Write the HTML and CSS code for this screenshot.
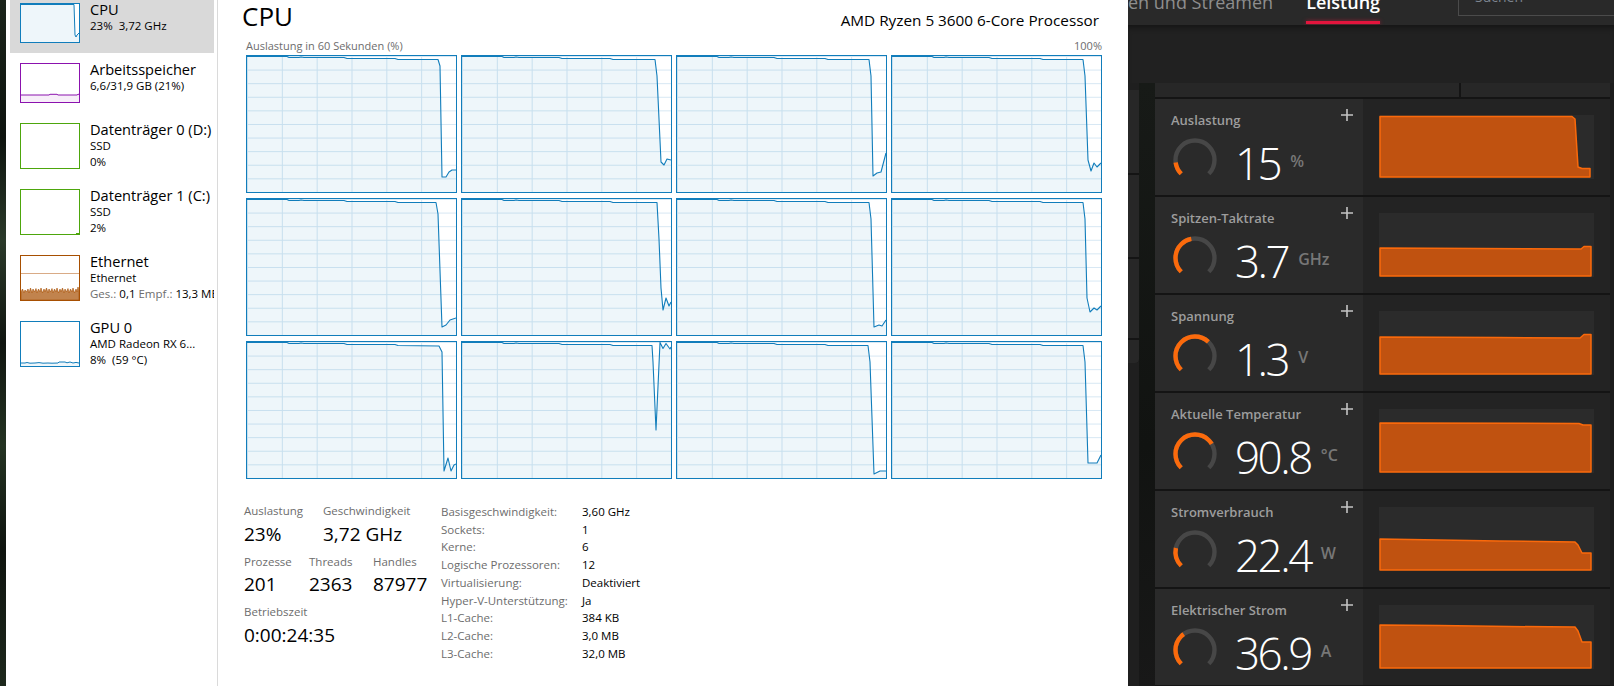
FILE: index.html
```html
<!DOCTYPE html>
<html lang="de">
<head>
<meta charset="utf-8">
<title>Task-Manager – CPU</title>
<link rel="stylesheet" href="styles.css">
</head>
<body>
<div class="screen">
  <div class="desktop-edge"></div>

  <div class="taskmgr">
    <aside class="tm-side">
      <div class="side-list">
        <div class="side-item selected">
          <div class="thumb thumb-cpu t40">
            <svg width="58" height="38" viewBox="0 0 58 38"><path class="f-blue" d="M0,38 L0,0.5 53,0.5 54,31 55,33 56,31 58,29 L58,38 Z"/><polyline class="l-blue" points="0,0.5 53,0.5 54,31 55,33 56,31 58,29"/></svg>
          </div>
          <div class="side-text">
            <div class="side-title">CPU</div>
            <div class="side-sub">23%&nbsp; 3,72 GHz</div>
          </div>
        </div>
        <div class="side-item">
          <div class="thumb thumb-mem t40">
            <svg width="58" height="38" viewBox="0 0 58 38"><path class="f-purple" d="M0,38 L0,31 28,31 29,30.3 36,30.3 37,31 56,31 57,30.3 58,30.3 L58,38 Z"/><polyline class="l-purple" points="0,31 28,31 29,30.3 36,30.3 37,31 56,31 57,30.3 58,30.3"/></svg>
          </div>
          <div class="side-text">
            <div class="side-title">Arbeitsspeicher</div>
            <div class="side-sub">6,6/31,9 GB (21%)</div>
          </div>
        </div>
        <div class="side-item">
          <div class="thumb thumb-disk t46"></div>
          <div class="side-text">
            <div class="side-title">Datenträger 0 (D:)</div>
            <div class="side-sub">SSD</div>
            <div class="side-sub">0%</div>
          </div>
        </div>
        <div class="side-item">
          <div class="thumb thumb-disk t46">
            <svg width="58" height="44" viewBox="0 0 58 44"><polyline class="l-green" points="55,43.5 58,43.5"/></svg>
          </div>
          <div class="side-text">
            <div class="side-title">Datenträger 1 (C:)</div>
            <div class="side-sub">SSD</div>
            <div class="side-sub">2%</div>
          </div>
        </div>
        <div class="side-item">
          <div class="thumb thumb-eth t46">
            <svg width="58" height="44" viewBox="0 0 58 44">
              <line class="l-eth-light" x1="0" y1="17.5" x2="58" y2="17.5"/>
              <path class="f-eth" d="M0,44 L0,36 1.5,33 3,37 4,34 5.5,36 7,33 8,37 9.5,32 11,37 12,33 13.5,36 15,32.5 16,37 17.5,33 19,36 20,32 21.5,37 23,33 24,36 25.5,32 27,37 28,33 29.5,36 31,32.5 32,37 33.5,33 35,36 36,32 37.5,37 39,33 40,36 41.5,32 43,37 44,33 45.5,36 47,32.5 48,37 49.5,33 51,36 52,32 53.5,37 55,33 56,36 57,31 58,35 L58,44 Z"/>
            </svg>
          </div>
          <div class="side-text">
            <div class="side-title">Ethernet</div>
            <div class="side-sub">Ethernet</div>
            <div class="side-sub"><span class="muted">Ges.:</span> 0,1 <span class="muted">Empf.:</span> 13,3 MBit/s</div>
          </div>
        </div>
        <div class="side-item">
          <div class="thumb thumb-gpu t46">
            <svg width="58" height="44" viewBox="0 0 58 44"><path class="f-blue" d="M0,44 L0,41 4,41 6,40.5 9,41.2 14,41 18,40.6 22,41.2 27,41 31,41.2 37,41 38,40 44,40 46,40.8 49,40 52,41 55,40.4 58,41 L58,44 Z"/><polyline class="l-blue" points="0,41 4,41 6,40.5 9,41.2 14,41 18,40.6 22,41.2 27,41 31,41.2 37,41 38,40 44,40 46,40.8 49,40 52,41 55,40.4 58,41"/></svg>
          </div>
          <div class="side-text">
            <div class="side-title">GPU 0</div>
            <div class="side-sub">AMD Radeon RX 6...</div>
            <div class="side-sub">8%&nbsp; (59 °C)</div>
          </div>
        </div>
      </div>
    </aside>

    <main class="tm-main">
      <header class="tm-head">
        <h1 class="tm-title">CPU</h1>
        <div class="cpu-name">AMD Ryzen 5 3600 6-Core Processor</div>
      </header>
      <div class="graph-caption"><span>Auslastung in 60 Sekunden (%)</span><span>100%</span></div>

      <div class="graph-grid">
        <div class="graph"><svg viewBox="0 0 209 136"><path class="gf" d="M0,136 L0,0.5 40,0.5 42,1.5 52,1.5 54,1 57,1.5 97,1.5 100,2.5 148,2.5 151,3.5 191,3.5 193,10 195,121 199,121 202,116 205,114 209,114 L209,136 Z"/><polyline class="gl" points="0,0.5 40,0.5 42,1.5 52,1.5 54,1 57,1.5 97,1.5 100,2.5 148,2.5 151,3.5 191,3.5 193,10 195,121 199,121 202,116 205,114 209,114"/></svg></div>
        <div class="graph"><svg viewBox="0 0 209 136"><path class="gf" d="M0,136 L0,0.5 40,0.5 42,1.5 52,1.5 54,1 57,1.5 97,1.5 100,2.5 148,2.5 151,3.5 193,3.5 195,20 199,106 202,109 205,103 209,104 L209,136 Z"/><polyline class="gl" points="0,0.5 40,0.5 42,1.5 52,1.5 54,1 57,1.5 97,1.5 100,2.5 148,2.5 151,3.5 193,3.5 195,20 199,106 202,109 205,103 209,104"/></svg></div>
        <div class="graph"><svg viewBox="0 0 209 136"><path class="gf" d="M0,136 L0,0.5 40,0.5 42,1.5 52,1.5 54,1 57,1.5 97,1.5 100,2.5 148,2.5 151,3.5 192,3.5 194,20 196,120 200,117 204,116 209,97 L209,136 Z"/><polyline class="gl" points="0,0.5 40,0.5 42,1.5 52,1.5 54,1 57,1.5 97,1.5 100,2.5 148,2.5 151,3.5 192,3.5 194,20 196,120 200,117 204,116 209,97"/></svg></div>
        <div class="graph"><svg viewBox="0 0 209 136"><path class="gf" d="M0,136 L0,0.5 40,0.5 42,1.5 52,1.5 54,1 57,1.5 97,1.5 100,2.5 148,2.5 151,3.5 191,3.5 193,20 196,104 199,115 202,107 205,111 209,107 L209,136 Z"/><polyline class="gl" points="0,0.5 40,0.5 42,1.5 52,1.5 54,1 57,1.5 97,1.5 100,2.5 148,2.5 151,3.5 191,3.5 193,20 196,104 199,115 202,107 205,111 209,107"/></svg></div>

        <div class="graph"><svg viewBox="0 0 209 136"><path class="gf" d="M0,136 L0,0.5 40,0.5 42,1.5 52,1.5 54,1 57,1.5 97,1.5 100,2.5 148,2.5 151,3.5 189,3.5 191,15 195,128 199,126 203,121 209,119 L209,136 Z"/><polyline class="gl" points="0,0.5 40,0.5 42,1.5 52,1.5 54,1 57,1.5 97,1.5 100,2.5 148,2.5 151,3.5 189,3.5 191,15 195,128 199,126 203,121 209,119"/></svg></div>
        <div class="graph"><svg viewBox="0 0 209 136"><path class="gf" d="M0,136 L0,0.5 40,0.5 42,1.5 52,1.5 54,1 57,1.5 97,1.5 100,2.5 148,2.5 151,3.5 195,3.5 197,40 199,89 201,111 204,99 207,107 209,103 L209,136 Z"/><polyline class="gl" points="0,0.5 40,0.5 42,1.5 52,1.5 54,1 57,1.5 97,1.5 100,2.5 148,2.5 151,3.5 195,3.5 197,40 199,89 201,111 204,99 207,107 209,103"/></svg></div>
        <div class="graph"><svg viewBox="0 0 209 136"><path class="gf" d="M0,136 L0,0.5 40,0.5 42,1.5 52,1.5 54,1 57,1.5 97,1.5 100,2.5 148,2.5 151,3.5 192,3.5 194,20 197,128 202,126 205,127 209,121 L209,136 Z"/><polyline class="gl" points="0,0.5 40,0.5 42,1.5 52,1.5 54,1 57,1.5 97,1.5 100,2.5 148,2.5 151,3.5 192,3.5 194,20 197,128 202,126 205,127 209,121"/></svg></div>
        <div class="graph"><svg viewBox="0 0 209 136"><path class="gf" d="M0,136 L0,0.5 40,0.5 42,1.5 52,1.5 54,1 57,1.5 97,1.5 100,2.5 148,2.5 151,3.5 191,3.5 193,20 195,99 198,113 202,109 205,111 209,107 L209,136 Z"/><polyline class="gl" points="0,0.5 40,0.5 42,1.5 52,1.5 54,1 57,1.5 97,1.5 100,2.5 148,2.5 151,3.5 191,3.5 193,20 195,99 198,113 202,109 205,111 209,107"/></svg></div>

        <div class="graph"><svg viewBox="0 0 209 136"><path class="gf" d="M0,136 L0,0.5 40,0.5 42,1.5 52,1.5 54,1 57,1.5 97,1.5 100,2.5 148,2.5 151,3.5 192,4 195,10 197,129 201,116 204,129 207,123 209,122 L209,136 Z"/><polyline class="gl" points="0,0.5 40,0.5 42,1.5 52,1.5 54,1 57,1.5 97,1.5 100,2.5 148,2.5 151,3.5 192,4 195,10 197,129 201,116 204,129 207,123 209,122"/></svg></div>
        <div class="graph"><svg viewBox="0 0 209 136"><path class="gf" d="M0,136 L0,0.5 40,0.5 42,1.5 52,1.5 54,1 57,1.5 97,1.5 100,2.5 148,2.5 151,3.5 190,3.5 191,20 194,88 198,0.5 201,6.5 204,1.5 208,7 209,5 L209,136 Z"/><polyline class="gl" points="0,0.5 40,0.5 42,1.5 52,1.5 54,1 57,1.5 97,1.5 100,2.5 148,2.5 151,3.5 190,3.5 191,20 194,88 198,0.5 201,6.5 204,1.5 208,7 209,5"/></svg></div>
        <div class="graph"><svg viewBox="0 0 209 136"><path class="gf" d="M0,136 L0,0.5 40,0.5 42,1.5 52,1.5 54,1 57,1.5 97,1.5 100,2.5 148,2.5 151,3.5 191,3.5 193,20 197,132 203,129 209,129 L209,136 Z"/><polyline class="gl" points="0,0.5 40,0.5 42,1.5 52,1.5 54,1 57,1.5 97,1.5 100,2.5 148,2.5 151,3.5 191,3.5 193,20 197,132 203,129 209,129"/></svg></div>
        <div class="graph"><svg viewBox="0 0 209 136"><path class="gf" d="M0,136 L0,0.5 40,0.5 42,1.5 52,1.5 54,1 57,1.5 97,1.5 100,2.5 148,2.5 151,3.5 191,3.5 193,20 196,121 205,121 209,113 L209,136 Z"/><polyline class="gl" points="0,0.5 40,0.5 42,1.5 52,1.5 54,1 57,1.5 97,1.5 100,2.5 148,2.5 151,3.5 191,3.5 193,20 196,121 205,121 209,113"/></svg></div>
      </div>

      <section class="stats">
        <div class="stats-left">
          <div class="stat-row">
            <div class="stat w79"><div class="stat-lbl">Auslastung</div><div class="stat-val">23%</div></div>
            <div class="stat"><div class="stat-lbl">Geschwindigkeit</div><div class="stat-val">3,72 GHz</div></div>
          </div>
          <div class="stat-row">
            <div class="stat w65"><div class="stat-lbl">Prozesse</div><div class="stat-val">201</div></div>
            <div class="stat w64"><div class="stat-lbl">Threads</div><div class="stat-val">2363</div></div>
            <div class="stat"><div class="stat-lbl">Handles</div><div class="stat-val">87977</div></div>
          </div>
          <div class="stat-row">
            <div class="stat"><div class="stat-lbl">Betriebszeit</div><div class="stat-val">0:00:24:35</div></div>
          </div>
        </div>
        <dl class="spec">
          <dt>Basisgeschwindigkeit:</dt><dd>3,60 GHz</dd>
          <dt>Sockets:</dt><dd>1</dd>
          <dt>Kerne:</dt><dd>6</dd>
          <dt>Logische Prozessoren:</dt><dd>12</dd>
          <dt>Virtualisierung:</dt><dd>Deaktiviert</dd>
          <dt>Hyper-V-Unterstützung:</dt><dd>Ja</dd>
          <dt>L1-Cache:</dt><dd>384 KB</dd>
          <dt>L2-Cache:</dt><dd>3,0 MB</dd>
          <dt>L3-Cache:</dt><dd>32,0 MB</dd>
        </dl>
      </section>
    </main>
  </div>

  <div class="adrenalin">
    <div class="adr-top">
      <div class="adr-tab">en und Streamen</div>
      <div class="adr-tab active"><span class="adr-tab-text">Leistung</span><span class="adr-tab-line"></span></div>
      <div class="adr-search"><span>Suchen</span></div>
    </div>
    <div class="adr-band"></div>
    <div class="adr-body">
      <div class="adr-leftcol">
        <div class="adr-lpanel">
          <div class="lp h83"></div>
          <div class="lp h82"></div>
          <div class="lp h79"></div>
          <div class="lp h23"></div>
        </div>
      </div>
      <div class="adr-gap"></div>
      <div class="adr-main">
        <div class="adr-subhead"><div class="sh1"></div><div class="sh2"></div></div>

        <div class="card">
          <div class="card-info">
            <div class="card-head"><span class="card-label">Auslastung</span><svg class="plus" width="12" height="12" viewBox="0 0 12 12"><path d="M6 0V12M0 6H12"/></svg></div>
            <div class="card-row">
              <svg class="gauge" width="48" height="48" viewBox="0 0 48 48"><path class="g-track" d="M10.21 37.79A19.5 19.5 0 1 1 37.79 37.79"/><path class="g-fill" pathLength="100" stroke-dasharray="14 200" d="M10.21 37.79A19.5 19.5 0 1 1 37.79 37.79"/></svg>
              <span class="card-val">15</span><span class="card-unit">%</span>
            </div>
          </div>
          <div class="card-chart"><div class="chart"><svg width="215" height="64" viewBox="0 0 215 64"><path d="M1 62L1 1.5L193 1.5L196 4L199 52L203 53.5L211 53.5L211 62Z"/></svg></div></div>
        </div>

        <div class="card">
          <div class="card-info">
            <div class="card-head"><span class="card-label">Spitzen-Taktrate</span><svg class="plus" width="12" height="12" viewBox="0 0 12 12"><path d="M6 0V12M0 6H12"/></svg></div>
            <div class="card-row">
              <svg class="gauge" width="48" height="48" viewBox="0 0 48 48"><path class="g-track" d="M10.21 37.79A19.5 19.5 0 1 1 37.79 37.79"/><path class="g-fill" pathLength="100" stroke-dasharray="46 200" d="M10.21 37.79A19.5 19.5 0 1 1 37.79 37.79"/></svg>
              <span class="card-val">3.7</span><span class="card-unit">GHz</span>
            </div>
          </div>
          <div class="card-chart"><div class="chart"><svg width="215" height="64" viewBox="0 0 215 64"><path d="M1 63L1 35L100 35.5L202 36L205 33.5L212 33.5L212 63Z"/></svg></div></div>
        </div>

        <div class="card">
          <div class="card-info">
            <div class="card-head"><span class="card-label">Spannung</span><svg class="plus" width="12" height="12" viewBox="0 0 12 12"><path d="M6 0V12M0 6H12"/></svg></div>
            <div class="card-row">
              <svg class="gauge" width="48" height="48" viewBox="0 0 48 48"><path class="g-track" d="M10.21 37.79A19.5 19.5 0 1 1 37.79 37.79"/><path class="g-fill" pathLength="100" stroke-dasharray="66 200" d="M10.21 37.79A19.5 19.5 0 1 1 37.79 37.79"/></svg>
              <span class="card-val">1.3</span><span class="card-unit">V</span>
            </div>
          </div>
          <div class="card-chart"><div class="chart"><svg width="215" height="64" viewBox="0 0 215 64"><path d="M1 63L1 26L120 26.5L201 27L205 23.5L212 23.5L212 63Z"/></svg></div></div>
        </div>

        <div class="card">
          <div class="card-info">
            <div class="card-head"><span class="card-label">Aktuelle Temperatur</span><svg class="plus" width="12" height="12" viewBox="0 0 12 12"><path d="M6 0V12M0 6H12"/></svg></div>
            <div class="card-row">
              <svg class="gauge" width="48" height="48" viewBox="0 0 48 48"><path class="g-track" d="M10.21 37.79A19.5 19.5 0 1 1 37.79 37.79"/><path class="g-fill" pathLength="100" stroke-dasharray="72 200" d="M10.21 37.79A19.5 19.5 0 1 1 37.79 37.79"/></svg>
              <span class="card-val">90.8</span><span class="card-unit">°C</span>
            </div>
          </div>
          <div class="card-chart"><div class="chart"><svg width="215" height="64" viewBox="0 0 215 64"><path d="M1 63L1 14L200 14.5L204 16L212 16L212 63Z"/></svg></div></div>
        </div>

        <div class="card">
          <div class="card-info">
            <div class="card-head"><span class="card-label">Stromverbrauch</span><svg class="plus" width="12" height="12" viewBox="0 0 12 12"><path d="M6 0V12M0 6H12"/></svg></div>
            <div class="card-row">
              <svg class="gauge" width="48" height="48" viewBox="0 0 48 48"><path class="g-track" d="M10.21 37.79A19.5 19.5 0 1 1 37.79 37.79"/><path class="g-fill" pathLength="100" stroke-dasharray="21 200" d="M10.21 37.79A19.5 19.5 0 1 1 37.79 37.79"/></svg>
              <span class="card-val">22.4</span><span class="card-unit">W</span>
            </div>
          </div>
          <div class="card-chart"><div class="chart"><svg width="215" height="64" viewBox="0 0 215 64"><path d="M1 63L1 32L60 33L120 34L196 35L199 38L203 46L212 46L212 63Z"/></svg></div></div>
        </div>

        <div class="card">
          <div class="card-info">
            <div class="card-head"><span class="card-label">Elektrischer Strom</span><svg class="plus" width="12" height="12" viewBox="0 0 12 12"><path d="M6 0V12M0 6H12"/></svg></div>
            <div class="card-row">
              <svg class="gauge" width="48" height="48" viewBox="0 0 48 48"><path class="g-track" d="M10.21 37.79A19.5 19.5 0 1 1 37.79 37.79"/><path class="g-fill" pathLength="100" stroke-dasharray="37 200" d="M10.21 37.79A19.5 19.5 0 1 1 37.79 37.79"/></svg>
              <span class="card-val">36.9</span><span class="card-unit">A</span>
            </div>
          </div>
          <div class="card-chart"><div class="chart"><svg width="215" height="64" viewBox="0 0 215 64"><path d="M1 63L1 20L60 20.5L130 21.5L196 22L199 26L203 37L212 37L212 63Z"/></svg></div></div>
        </div>
      </div>
      <div class="adr-edge"></div>
    </div>
  </div>
</div>
</body>
</html>
```

FILE: styles.css
```css
* { box-sizing: border-box; }
html, body { margin: 0; padding: 0; }
body {
  width: 1614px;
  height: 686px;
  overflow: hidden;
  font-family: "Open Sans", "Noto Sans", sans-serif;
  background: #111;
}
.screen { display: flex; width: 1614px; height: 686px; overflow: hidden; }

/* desktop edge */
.desktop-edge {
  width: 6px;
  flex: none;
  background: linear-gradient(180deg, #1b241b 0%, #0d130e 20%, #2b3a2a 35%, #101510 50%, #243322 65%, #0f140f 80%, #1d281c 100%);
}

/* ---------- Task manager ---------- */
.taskmgr { width: 1122px; flex: none; display: flex; background: #fff; color: #000; }

.tm-side {
  width: 212px;
  flex: none;
  border-right: 1px solid #dadada;
  overflow: hidden;
}
.side-list { margin-top: -7px; }
.side-item {
  display: flex;
  align-items: flex-start;
  gap: 10px;
  margin: 0 3px 0 4px;
  padding: 10px 0 10px 10px;
  overflow: hidden;
  white-space: nowrap;
}
.side-item.selected { background: #d9d9d9; }
.thumb { width: 60px; flex: none; border: 1px solid; background: #fff; }
.thumb svg { display: block; }
.t40 { height: 40px; }
.t46 { height: 46px; }
.thumb-cpu, .thumb-gpu { border-color: #117dbb; }
.thumb-mem { border-color: #8b12ae; }
.thumb-disk { border-color: #4da60c; }
.thumb-eth { border-color: #a74f01; }

.f-blue { fill: rgba(17,125,187,0.07); }
.l-blue { fill: none; stroke: #117dbb; stroke-width: 1; }
.f-purple { fill: rgba(139,18,174,0.07); }
.l-purple { fill: none; stroke: #8b12ae; stroke-width: 1; }
.l-green { fill: none; stroke: #4da60c; stroke-width: 1; }
.l-eth-light { stroke: #d9ab86; stroke-width: 1; }
.f-eth { fill: rgba(167,79,1,0.7); stroke: #a74f01; stroke-width: 0.6; }

.side-text { margin: -3px 0 -6px; min-width: 0; }
.side-title { font-size: 14.6px; line-height: 18px; color: #000; }
.side-sub { font-size: 11.5px; line-height: 16px; color: #000; }
.muted { color: #6d6d6d; }

.tm-main {
  flex: 1;
  padding: 1px 26px 0 28px;
  overflow: hidden;
}
.tm-head {
  display: flex;
  justify-content: space-between;
  align-items: baseline;
  height: 30px;
}
.tm-title {
  margin: 0 0 0 -4px;
  font-size: 26px;
  line-height: 30px;
  font-weight: 400;
}
.cpu-name { font-size: 15.3px; margin-right: 3px; }
.graph-caption {
  display: flex;
  justify-content: space-between;
  margin-top: 7px;
  height: 15px;
  font-size: 11px;
  line-height: 15px;
  color: #6d6d6d;
}
.graph-grid {
  margin-top: 2px;
  display: grid;
  grid-template-columns: repeat(4, 211px);
  grid-template-rows: repeat(3, 138px);
  column-gap: 4px;
  row-gap: 5px;
}
.graph {
  border: 1px solid #117dbb;
  background-color: #fff;
  background-image:
    linear-gradient(to right, #d6e7f3 1px, transparent 1px),
    linear-gradient(to bottom, #d6e7f3 1px, transparent 1px);
  background-size: 34.83px 100%, 100% 13.6px;
  background-position: 34.83px 0, 0 13.6px;
}
.graph svg { display: block; width: 209px; height: 136px; }
.gf { fill: rgba(17,125,187,0.07); }
.gl { fill: none; stroke: #117dbb; stroke-width: 1.1; stroke-linejoin: round; }

.stats { display: flex; margin: 24px 0 0 -2px; }
.stats-left { width: 197px; flex: none; }
.stat-row { display: flex; }
.stat-row + .stat-row { margin-top: 8px; }
.w79 { width: 79px; }
.w65 { width: 65px; }
.w64 { width: 64px; }
.stat-lbl { font-size: 11.5px; line-height: 16px; color: #6d6d6d; }
.stat-val { font-size: 19px; line-height: 24px; margin-top: 2.5px; color: #000; }

.spec {
  margin: 0;
  display: grid;
  grid-template-columns: 141px auto;
  font-size: 11.5px;
  line-height: 17.7px;
}
.spec dt { color: #6d6d6d; }
.spec dd { margin: 0; color: #000; }

/* ---------- Adrenalin ---------- */
.adrenalin {
  flex: 1;
  display: flex;
  flex-direction: column;
  background: #1e1e1e;
  overflow: hidden;
}
.adr-top {
  height: 25px;
  flex: none;
  display: flex;
  background: #292929;
  overflow: hidden;
}
.adr-tab {
  font-size: 18px;
  line-height: 24px;
  margin-top: -10px;
  color: #8e8e8e;
  white-space: nowrap;
}
.adr-tab.active {
  margin: 0 0 0 33px;
  display: flex;
  flex-direction: column;
  height: 25px;
}
.adr-tab-text {
  margin-top: -10px;
  color: #fff;
  font-weight: 600;
  font-size: 18px;
  line-height: 24px;
}
.adr-tab-line {
  margin-top: auto;
  margin-bottom: 1px;
  height: 3px;
  background: #e3153d;
  box-shadow: 0 0 4px rgba(227,21,61,0.6);
}
.adr-search {
  margin: -2px 0 0 78px;
  width: 170px;
  height: 18px;
  flex: none;
  border: 1px solid #4b4b4b;
  padding-left: 16px;
  overflow: hidden;
}
.adr-search span {
  display: block;
  margin-top: -12px;
  font-size: 14px;
  line-height: 20px;
  color: #7d8590;
}
.adr-band {
  height: 58px;
  flex: none;
  background: #212121;
  box-shadow: inset 0 5px 6px -3px rgba(0,0,0,0.45);
}
.adr-body { flex: 1; display: flex; }
.adr-leftcol { width: 11px; flex: none; background: #1f1f1f; }
.adr-lpanel {
  margin-top: 7px;
  background: #141414;
  border-bottom-right-radius: 4px;
  overflow: hidden;
}
.lp { background: #272727; }
.lp + .lp { margin-top: 2px; }
.h83 { height: 83px; }
.h82 { height: 82px; }
.h79 { height: 79px; }
.h23 { height: 23px; }
.adr-gap { width: 16px; flex: none; background: linear-gradient(180deg, #171a17, #111311 60%, #181818); }
.adr-main { width: 455px; flex: none; background: #141414; }
.adr-edge { flex: 1; background: #1c1c1c; }
.adr-subhead {
  height: 16px;
  display: flex;
  gap: 2px;
  border-bottom: 2px solid #141414;
}
.sh1 { width: 304px; background: #272727; }
.sh2 { flex: 1; background: #272727; }

.card { height: 96px; display: flex; margin-bottom: 2px; }
.card-info {
  width: 208px;
  flex: none;
  background: #2a2a2a;
  padding: 12px 0 0 16px;
}
.card-head {
  display: flex;
  justify-content: space-between;
  align-items: flex-start;
  padding-right: 10px;
  height: 18px;
}
.card-label {
  font-size: 13px;
  line-height: 18px;
  font-weight: 600;
  color: #9d9d9d;
}
.plus { margin-top: -2px; }
.plus path { stroke: #c4c4c4; stroke-width: 1.6; fill: none; }
.card-row { display: flex; align-items: flex-start; margin-top: 7px; }
.gauge { flex: none; display: block; }
.g-track { fill: none; stroke: #474747; stroke-width: 4.4; }
.g-fill { fill: none; stroke: #fb6a0c; stroke-width: 4.4; }
.card-val {
  margin: 3px 0 0 16px;
  font-size: 44px;
  line-height: 48px;
  font-weight: 300;
  letter-spacing: -2.5px;
  color: #fff;
}
.card-unit {
  margin: 15px 0 0 10px;
  font-size: 16px;
  line-height: 20px;
  font-weight: 600;
  color: #777;
}
.card-chart {
  flex: 1;
  background: #232323;
  padding: 16px 16px 0 16px;
}
.chart { width: 215px; height: 64px; background: #2b2b2b; }
.chart svg { display: block; }
.chart path { fill: #c05210; stroke: #fa690b; stroke-width: 1.5; stroke-linejoin: round; }
```
